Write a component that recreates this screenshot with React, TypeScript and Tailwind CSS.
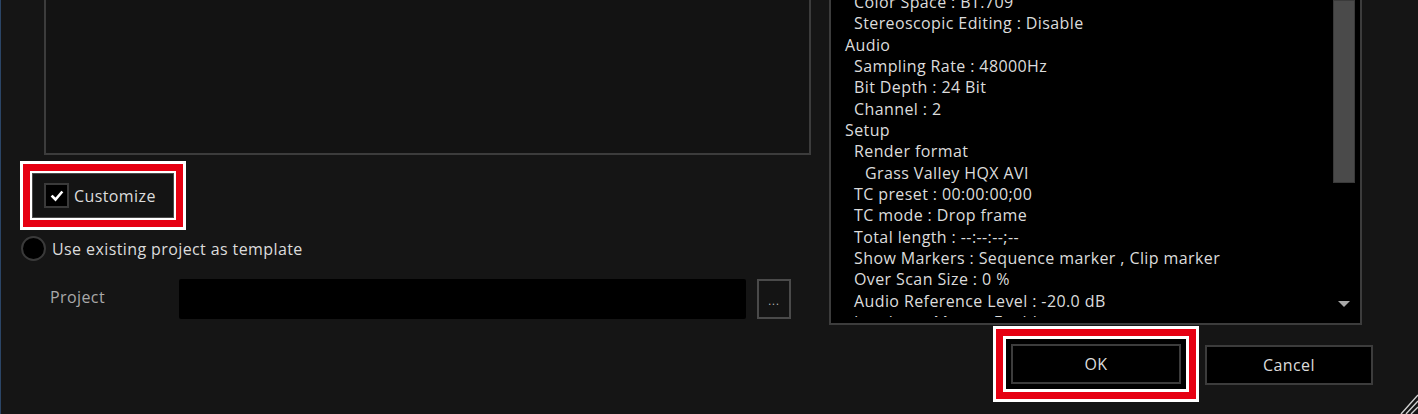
import React from "react";

const lines: { t: string; indent: number }[] = [
  { t: "Color Space : BT.709", indent: 1 },
  { t: "Stereoscopic Editing : Disable", indent: 1 },
  { t: "Audio", indent: 0 },
  { t: "Sampling Rate : 48000Hz", indent: 1 },
  { t: "Bit Depth : 24 Bit", indent: 1 },
  { t: "Channel : 2", indent: 1 },
  { t: "Setup", indent: 0 },
  { t: "Render format", indent: 1 },
  { t: "Grass Valley HQX AVI", indent: 2 },
  { t: "TC preset : 00:00:00;00", indent: 1 },
  { t: "TC mode : Drop frame", indent: 1 },
  { t: "Total length : --:--:--;--", indent: 1 },
  { t: "Show Markers : Sequence marker , Clip marker", indent: 1 },
  { t: "Over Scan Size : 0 %", indent: 1 },
  { t: "Audio Reference Level : -20.0 dB", indent: 1 },
  { t: "Loudness Meter : Enable", indent: 1 },
];

const indentCls = ["pl-[14px]", "pl-[23px]", "pl-[34px]"];

export default function App() {
  return (
    <div
      className="w-[1418px] h-[414px] overflow-hidden bg-[#151515] border-l border-[#2b4566] flex text-[16px] tracking-[0.4px] text-[#dcdcdc] relative"
      style={{ fontFamily: '"Open Sans", "Noto Sans", sans-serif' }}
    >
      {/* Left column */}
      <div className="w-[828px] flex flex-col shrink-0">
        <div className="ml-[43px] w-[767px] h-[155px] bg-[#131313] border-l-2 border-b-2 border-r-2 border-[#3c3c3c]" />

        {/* Customize highlighted */}
        <div className="ml-[19px] mt-[6px] w-[166px] h-[69px] border-[3px] border-white bg-[#e60012] p-[7px]">
          <div className="w-full h-full border-2 border-white">
            <div className="w-full h-full border border-[#4a4a4a] bg-[#141414] flex items-center pl-[11px]">
              <div className="w-[25px] h-[25px] border-2 border-[#3a3a3a] bg-black flex items-center justify-center">
                <svg width="14" height="14" viewBox="0 0 14 14">
                  <path d="M2.5 7.5 L5.5 10.5 L11.5 3.5" stroke="#ffffff" strokeWidth="2.6" fill="none" strokeLinecap="square" />
                </svg>
              </div>
              <span className="ml-[5px] leading-none">Customize</span>
            </div>
          </div>
        </div>

        {/* Radio */}
        <div className="mt-[6px] ml-[20px] flex items-center h-[25px]">
          <div className="w-[25px] h-[25px] rounded-full border-2 border-[#3a3a3a] bg-black" />
          <span className="ml-[6px]">Use existing project as template</span>
        </div>

        {/* Project row */}
        <div className="mt-[17px] flex items-center h-[41px]">
          <span className="ml-[49px] w-[129px] text-[#a9a9a9] mb-[3px]">Project</span>
          <div className="w-[567px] h-[40px] bg-black rounded-[2px]" />
          <div className="ml-[11px] w-[34px] h-[40px] border-2 border-[#4a4a4a] bg-[#141414] flex items-center justify-center">
            <span className="text-[11px] text-[#bbbbbb] leading-none tracking-[1px] mt-[4px]">...</span>
          </div>
        </div>
      </div>

      {/* Right column */}
      <div className="flex-1 flex flex-col">
        <div className="w-[533px] h-[325px] bg-black border-l-2 border-b-2 border-r-2 border-[#3c3c3c] flex">
          <div className="flex-1 h-[317px] overflow-hidden">
            <div className="mt-[-8px]">
              {lines.map((l, i) => (
                <div key={i} className={`h-[21.33px] leading-[21.33px] whitespace-nowrap ${indentCls[l.indent]}`}>
                  {l.t}
                </div>
              ))}
            </div>
          </div>
          <div className="w-[29px] flex flex-col items-start pl-[2px] pr-[5px]">
            <div className="w-[22px] h-[183px] bg-[#4a4a4a] border border-[#3a3a3a]" />
            <div className="flex-1" />
            <div className="mb-[16px] ml-[5px]">
              <svg width="12" height="6" viewBox="0 0 12 6">
                <path d="M0 0 L12 0 L6 6 Z" fill="#a8a8a8" />
              </svg>
            </div>
          </div>
        </div>

        <div className="flex items-start">
          {/* OK highlighted */}
          <div className="ml-[164px] mt-[1px] w-[206px] h-[76px] border-[3px] border-white bg-[#e60012] p-[7px]">
            <div className="w-full h-full border-[3px] border-white bg-black flex items-center justify-center">
              <div className="w-[170px] h-[40px] border-2 border-[#3c3c3c] bg-black flex items-center justify-center">
                OK
              </div>
            </div>
          </div>
          <div className="ml-[6px] mt-[20px] w-[168px] h-[40px] border-2 border-[#3c3c3c] bg-black flex items-center justify-center">
            Cancel
          </div>
        </div>
      </div>

      {/* Resize grip */}
      <svg className="absolute right-0 bottom-0" width="20" height="22" viewBox="0 0 20 22">
        <path d="M3 22 L20 3 M8 22 L20 9 M13 22 L20 15" stroke="#d0d0d0" strokeWidth="1.4" fill="none" />
      </svg>
    </div>
  );
}
